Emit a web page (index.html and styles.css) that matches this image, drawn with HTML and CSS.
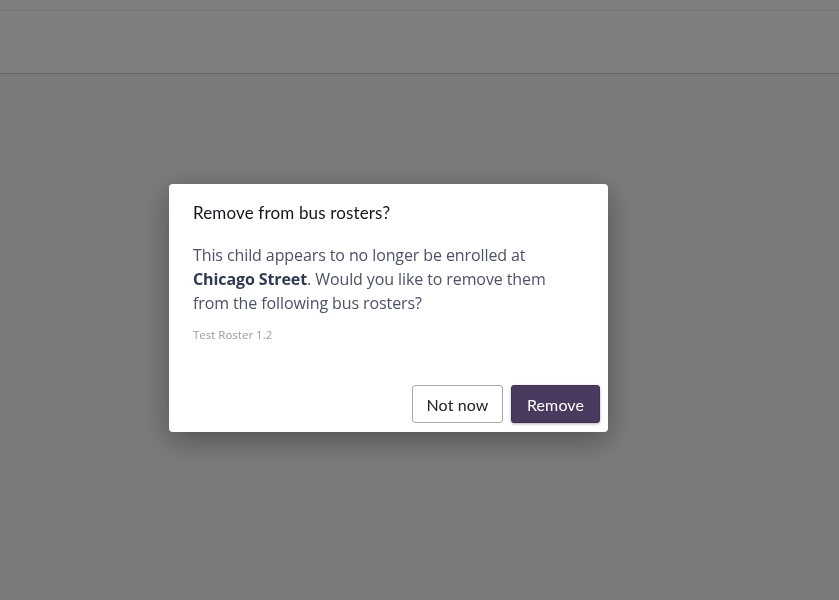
FILE: index.html
```html
<!DOCTYPE html>
<html>
<head>
<meta charset="utf-8">
<link rel="stylesheet" href="styles.css">
</head>
<body>
<div class="page">
  <div class="topbar"></div>
  <div class="header"></div>
  <div class="content"></div>
</div>
<div class="overlay">
  <div class="dialog">
    <h2 class="title">Remove from bus rosters?</h2>
    <p class="message">This child appears to no longer be enrolled at <strong>Chicago Street</strong>. Would you like to remove them from the following bus rosters?</p>
    <ul class="rosters"><li>Test Roster 1.2</li></ul>
    <div class="actions">
      <button class="btn btn-secondary">Not now</button>
      <button class="btn btn-primary">Remove</button>
    </div>
  </div>
</div>
</body>
</html>
```
FILE: styles.css
```css
* { box-sizing: border-box; }
html, body { margin: 0; padding: 0; height: 100%; }
body { font-family: "Open Sans", sans-serif; background: #f9f9fb; overflow: hidden; }
.page { display: flex; flex-direction: column; height: 100%; }
.topbar { height: 11px; background: #fff; border-bottom: 1px solid #ececec; }
.header { height: 63px; background: #fff; border-bottom: 1px solid #cfcfcf; }
.content { flex: 1; background: #f7f7fb; }
.overlay {
  position: fixed; inset: 0;
  background: rgba(0,0,0,0.5);
}
.dialog {
  position: absolute; left: 169px; top: 184px;
  width: 439px; height: 248px;
  background: #fff; border-radius: 4px;
  box-shadow: 0 8px 30px rgba(0,0,0,0.35);
  padding: 19px 8px 9px 24px;
  display: flex; flex-direction: column;
}
.title {
  margin: 0; font-family: Lato, "Open Sans", sans-serif; font-weight: 400;
  font-size: 17px; line-height: 20px; color: #15151c; letter-spacing: 0.15px;
}
.message {
  margin: 20px 0 0; padding-right: 40px;
  font-size: 16px; line-height: 24px; color: #4d5264; letter-spacing: -0.1px;
}
.message strong { color: #2f3a52; font-weight: 700; }
.rosters { list-style: none; margin: 12px 0 0; padding: 0; font-size: 11.5px; line-height: 16px; color: #9a9aa2; }
.actions { margin-top: auto; display: flex; justify-content: flex-end; gap: 8px; }
.btn {
  height: 38px; border-radius: 3px; font-family: Lato, "Open Sans", sans-serif;
  font-size: 16px; padding: 0; cursor: pointer; letter-spacing: 0.1px;
}
.btn-secondary { width: 91px; background: #fff; border: 1px solid #aaaaaf; color: #22222a; }
.btn-primary { width: 89px; background: #4b3a5f; border: 1px solid #3f3150; color: #fff; box-shadow: 0 1px 3px rgba(0,0,0,0.3); }
```
